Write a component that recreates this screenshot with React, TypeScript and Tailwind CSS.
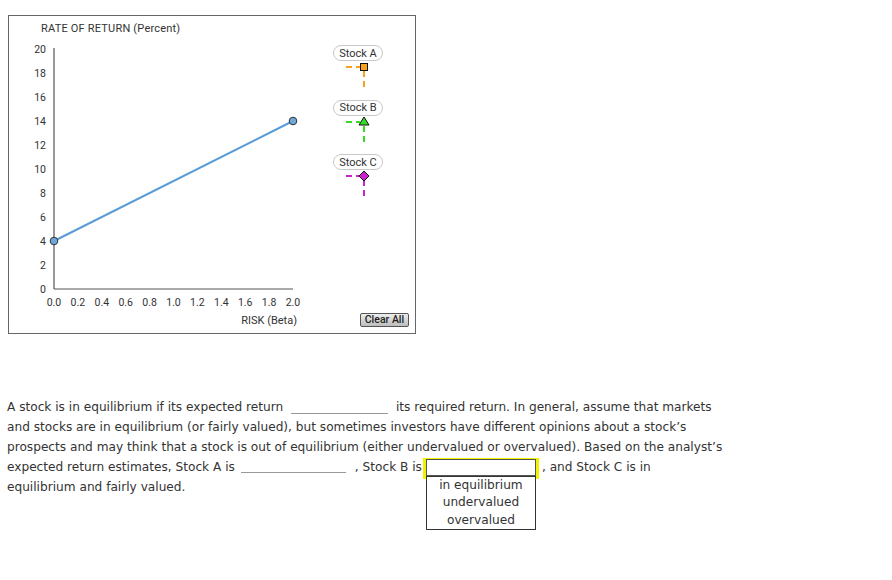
import React from "react";

const chartFont = { fontFamily: "Roboto, 'DejaVu Sans', sans-serif" };

function Chart() {
  const x = (b: number) => 45 + 119.5 * b;
  const y = (v: number) => 273 - 12 * v;
  const yTicks = [0, 2, 4, 6, 8, 10, 12, 14, 16, 18, 20];
  const xTicks = [0, 0.2, 0.4, 0.6, 0.8, 1.0, 1.2, 1.4, 1.6, 1.8, 2.0];
  return (
    <svg width="320" height="317" className="block shrink-0" style={chartFont}>
      <text x="32" y="16" fontSize="11" fill="#333" letterSpacing="0.2">RATE OF RETURN (Percent)</text>
      {yTicks.map((v) => (
        <text key={v} x="37" y={y(v) + 3.5} fontSize="10.5" fill="#333" textAnchor="end">
          {v}
        </text>
      ))}
      {xTicks.map((b) => (
        <text key={b} x={x(b)} y="289.5" fontSize="10.5" fill="#333" textAnchor="middle">
          {b.toFixed(1)}
        </text>
      ))}
      <text x="288" y="307.5" fontSize="11" fill="#333" textAnchor="end">RISK (Beta)</text>
      <line x1={x(0)} y1={y(20) - 1} x2={x(0)} y2={y(0)} stroke="#555" strokeWidth="1.2" />
      <line x1={x(0)} y1={y(0)} x2={x(2)} y2={y(0)} stroke="#555" strokeWidth="1.2" />
      <line x1={x(0)} y1={y(4)} x2={x(2)} y2={y(14)} stroke="#5b9bd5" strokeWidth="2" />
      <circle cx={x(0)} cy={y(4)} r="3.8" fill="#6fa8dc" stroke="#333" strokeWidth="1" />
      <circle cx={x(2)} cy={y(14)} r="3.8" fill="#6fa8dc" stroke="#333" strokeWidth="1" />
    </svg>
  );
}

function Legend({ label, color, shape }: { label: string; color: string; shape: "square" | "triangle" | "diamond" }) {
  const cx = 31;
  const cy = 6;
  return (
    <div className="flex flex-col h-[54.5px]">
      <div
        className="w-[50px] h-[16px] rounded-full border border-[#c8c8c8] bg-white flex items-center justify-center text-[11px] text-[#333] leading-none"
        style={chartFont}
      >
        {label}
      </div>
      <svg width="50" height="30" className="block">
        <line x1="13" y1={cy} x2={cx - 4} y2={cy} stroke={color} strokeWidth="2" strokeDasharray="6 4" />
        <line x1={cx} y1={cy + 4} x2={cx} y2="26" stroke={color} strokeWidth="2" strokeDasharray="6 4" />
        {shape === "square" && (
          <rect x={cx - 3.5} y={cy - 3.5} width="7" height="7" fill={color} stroke="#111" strokeWidth="1" />
        )}
        {shape === "triangle" && (
          <polygon
            points={`${cx},${cy - 5} ${cx + 5},${cy + 3} ${cx - 5},${cy + 3}`}
            fill={color}
            stroke="#111"
            strokeWidth="1"
          />
        )}
        {shape === "diamond" && (
          <polygon
            points={`${cx},${cy - 5} ${cx + 5},${cy} ${cx},${cy + 5} ${cx - 5},${cy}`}
            fill={color}
            stroke="#111"
            strokeWidth="1"
          />
        )}
      </svg>
    </div>
  );
}

function Blank({ w }: { w: string }) {
  return <span className={`inline-block ${w} h-[12px] border-b border-[#999] align-[-3px]`} />;
}

export default function App() {
  return (
    <div className="w-[892px] h-[580px] bg-white overflow-hidden">
      <div className="pt-[15px] pl-[8px]">
        <div className="w-[408px] h-[319px] border border-[#666] bg-white flex">
          <Chart />
          <div className="flex flex-col flex-1 pl-[4px] pt-[29px] pb-[6px]">
            <Legend label="Stock A" color="#f7a21b" shape="square" />
            <Legend label="Stock B" color="#33dd22" shape="triangle" />
            <Legend label="Stock C" color="#cc22cc" shape="diamond" />
            <div className="mt-auto flex justify-end pr-[6px]">
              <button
                className="w-[49px] h-[14px] border border-[#555] rounded-[2px] bg-gradient-to-b from-[#eeeeee] to-[#bdbdbd] text-[10.5px] leading-none text-[#222] flex items-center justify-center font-medium"
                style={chartFont}
              >
                Clear All
              </button>
            </div>
          </div>
        </div>
      </div>
      <div
        className="mt-[63px] pl-[7px] text-[12.15px] leading-[20px] text-[#333] whitespace-nowrap"
        style={{ fontFamily: "'DejaVu Sans', Verdana, sans-serif" }}
      >
        <div>
          A stock is in equilibrium if its expected return <span className="inline-block w-[4px]" />
          <Blank w="w-[97px]" />
          <span className="inline-block w-[4px]" /> its required return. In general, assume that markets
        </div>
        <div>and stocks are in equilibrium (or fairly valued), but sometimes investors have different opinions about a stock’s</div>
        <div>prospects and may think that a stock is out of equilibrium (either undervalued or overvalued). Based on the analyst’s</div>
        <div className="flex items-center h-[20px]">
          <span>expected return estimates, Stock A is</span>
          <span className="inline-block w-[6px]" />
          <Blank w="w-[105px]" />
          <span className="ml-[9px]">, Stock B is</span>
          <span className="relative ml-[1px] inline-block w-[116px] h-[21px] border-x-[3px] border-t border-[#f2f200] mt-[2px] shrink-0">
            <span className="block w-full h-[17px] border border-[#555] bg-white" />
            <span className="absolute left-0 top-[17px] w-[110px] h-[54px] bg-white border border-[#333] flex flex-col items-center text-[#333]">
              <span className="h-[18px] leading-[16px]">in equilibrium</span>
              <span className="h-[18px] leading-[18px]">undervalued</span>
              <span className="h-[18px] leading-[18px]">overvalued</span>
            </span>
          </span>
          <span className="ml-[3px]">, and Stock C is in</span>
        </div>
        <div>equilibrium and fairly valued.</div>
      </div>
    </div>
  );
}
